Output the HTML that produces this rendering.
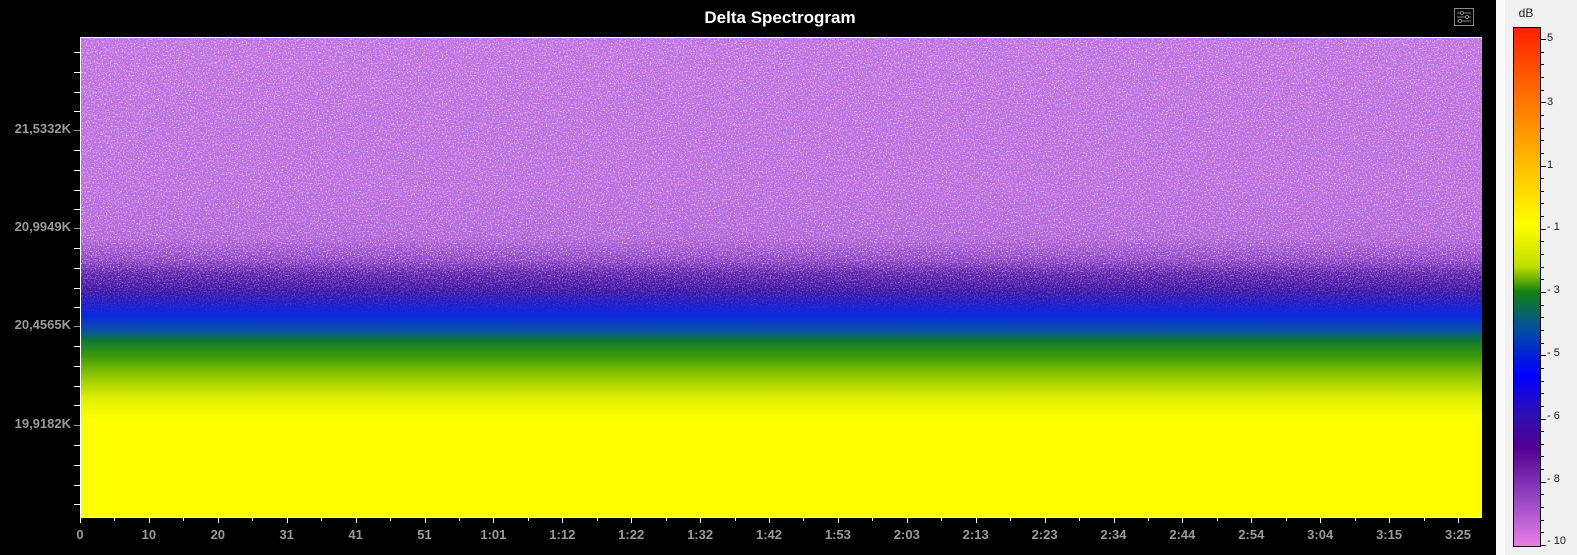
<!DOCTYPE html>
<html><head><meta charset="utf-8"><style>
html,body{margin:0;padding:0;width:1577px;height:555px;overflow:hidden;background:#f0f0f0;font-family:"Liberation Sans",sans-serif}
#blk{position:absolute;left:0;top:0;width:1496px;height:555px;background:#000}
#wht{position:absolute;left:1496px;top:0;width:9px;height:555px;background:#fafafa}
#title{position:absolute;left:0;width:1560px;top:8px;text-align:center;color:#fff;font-weight:bold;font-size:17px}
#plot{position:absolute;left:80px;top:37px;width:1401px;height:480px;border:1px solid #fff;border-right:none;border-bottom:none;overflow:hidden;
background:linear-gradient(to bottom,#c474de 0px,#c070dc 150px,#b466d6 200px,#8a44c0 222px,#5a22a8 235px,#3a14a0 252px,#1c1cc8 265px,#0a2ae0 278px,#0850a8 292px,#0e7a30 303px,#3c9a08 318px,#90c800 338px,#e0f000 360px,#ffff00 382px,#ffff00 480px)}
.yl{position:absolute;color:#9a9a9a;font-weight:bold;font-size:13px;right:1506px}
.xl{position:absolute;top:527px;color:#9a9a9a;font-weight:bold;font-size:13px;transform:translateX(-50%)}
#cb{position:absolute;left:1513px;top:27px;width:26px;height:518px;border:1px solid #000;
background:linear-gradient(to bottom,#ff2000 0%,#ff8000 16%,#ffc000 27%,#ffff00 38%,#c0e000 46%,#108010 51%,#0050a0 58%,#0000ff 67%,#3010b0 75%,#500090 81%,#9040c0 90%,#e880e8 100%)}
.cl{position:absolute;left:1547px;font-size:11px;color:#222}
</style></head><body>
<div id="blk"></div><div id="wht"></div>
<div id="title">Delta Spectrogram</div>
<svg style="position:absolute;left:1454px;top:8px" width="20" height="18" viewBox="0 0 20 18"><rect x="0.5" y="0.5" width="19" height="17" fill="none" stroke="#888"/><path d="M3 5H17M3 9H17M3 13H17" stroke="#888"/><circle cx="8" cy="5" r="1.6" fill="#000" stroke="#888"/><circle cx="13" cy="9" r="1.6" fill="#000" stroke="#888"/><circle cx="6" cy="13" r="1.6" fill="#000" stroke="#888"/></svg>
<div id="plot">
<svg width="1401" height="480" style="position:absolute;left:0;top:0">
<defs>
<filter id="n" x="0" y="0" width="100%" height="100%"><feTurbulence type="fractalNoise" baseFrequency="0.8" numOctaves="2" seed="3"/><feColorMatrix values="0 0 0 0 0.3  0 0 0 0 0.15  0 0 0 0 0.85  4 0 0 0 -2.1"/></filter>
<filter id="p" x="0" y="0" width="100%" height="100%"><feTurbulence type="fractalNoise" baseFrequency="0.75" numOctaves="2" seed="9"/><feColorMatrix values="0 0 0 0 0.95  0 0 0 0 0.55  0 0 0 0 0.95  0 4 0 0 -2.0"/></filter>
<linearGradient id="m" x1="0" y1="0" x2="0" y2="1"><stop offset="0" stop-color="#fff"/><stop offset="0.45" stop-color="#fff" stop-opacity="0.9"/><stop offset="0.58" stop-color="#fff" stop-opacity="0"/></linearGradient>
<mask id="mk"><rect width="1401" height="480" fill="url(#m)"/></mask></defs>
<g mask="url(#mk)"><rect width="1401" height="480" filter="url(#p)"/><rect width="1401" height="480" filter="url(#n)"/></g>
</svg>
</div>
<svg style="position:absolute;left:0;top:0" width="1496" height="555">
<g stroke="#fff" stroke-width="1">
<path d="M74 52.5H80M74 72.5H80M74 92.5H80M74 111.5H80M74 150.5H80M74 170.5H80M74 190.5H80M74 209.5H80M74 248.5H80M74 268.5H80M74 288.5H80M74 307.5H80M74 346.5H80M74 366.5H80M74 386.5H80M74 405.5H80M74 445.5H80M74 465.5H80M74 485.5H80M74 504.5H80"/>
<path d="M74 130.5H80M74 228.5H80M74 326.5H80M74 425.5H80" stroke="#999"/>
<path d="M80 517.5H1481"/>
</g>
<g id="xt" stroke="#fff"></g>
</svg>
<div class="yl" style="top:121px">21,5332K</div>
<div class="yl" style="top:219px">20,9949K</div>
<div class="yl" style="top:317px">20,4565K</div>
<div class="yl" style="top:416px">19,9182K</div>
<div id="xl"></div>
<div style="position:absolute;left:1503px;top:6px;width:46px;text-align:center;font-size:12px;color:#222">dB</div>
<div id="cb"></div>
<svg style="position:absolute;left:1540px;top:0" width="10" height="555" id="ct"></svg>
<div class="cl" style="top:32px">5</div>
<div class="cl" style="top:96px">3</div>
<div class="cl" style="top:159px">1</div>
<div class="cl" style="top:221px">- 1</div>
<div class="cl" style="top:284px">- 3</div>
<div class="cl" style="top:347px">- 5</div>
<div class="cl" style="top:410px">- 6</div>
<div class="cl" style="top:473px">- 8</div>
<div class="cl" style="top:535px">- 10</div>
<script>
var L=["0","10","20","31","41","51","1:01","1:12","1:22","1:32","1:42","1:53","2:03","2:13","2:23","2:34","2:44","2:54","3:04","3:15","3:25"];
var h="",t="";
for(var i=0;i<L.length;i++){var x=80+i*68.9;h+='<div class="xl" style="left:'+x+'px">'+L[i]+'</div>';}
for(var j=0;j<=40;j++){var x=Math.round(80+j*34.45)+0.5;if(x>1481)break;t+='<path d="M'+x+' 517V'+(j%2?521:523)+'"/>';}
document.getElementById("xl").innerHTML=h;
document.getElementById("xt").innerHTML=t;
var c="";for(var k=0;k<=40;k++){var y=Math.round(39+k*12.65)+0.5;if(y>546)break;c+='<path d="M0 '+y+'H'+(k%5==0?6:4)+'" stroke="#000"/>';}
document.getElementById("ct").innerHTML=c;
</script>
</body></html>
